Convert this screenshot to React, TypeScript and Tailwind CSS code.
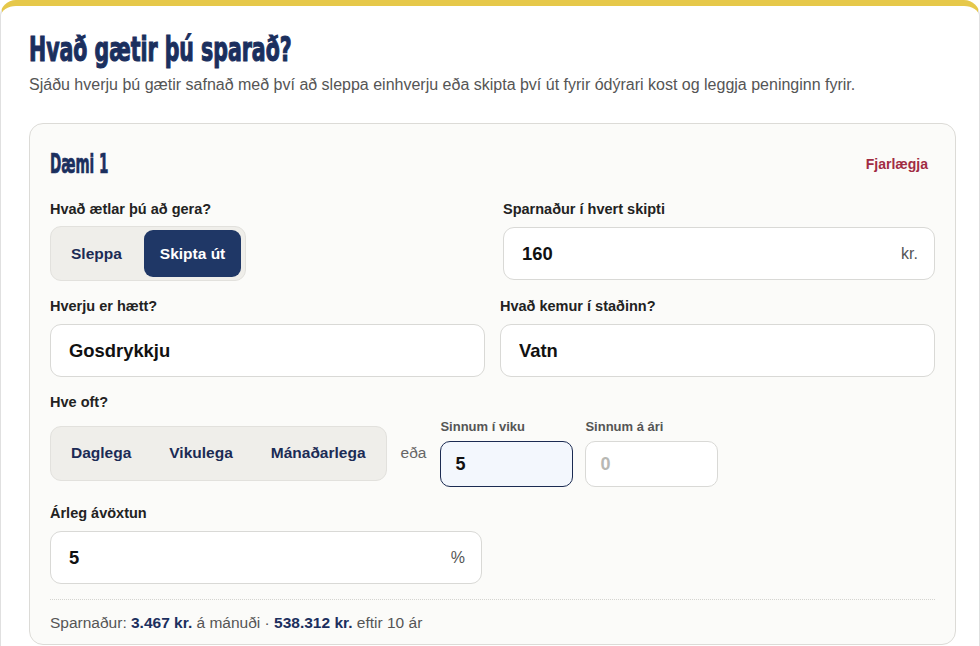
import React from "react";

const navy = "text-[#1b2f5e]";

function Label({ children }: { children: React.ReactNode }) {
  return <div className="text-[14.5px] leading-[20px] font-bold text-[#222]">{children}</div>;
}

function TextField({ value, suffix, className = "" }: { value: string; suffix?: string; className?: string }) {
  return (
    <div className={`mt-[8px] flex h-[53px] items-center rounded-[11px] border border-[#d9d9d6] bg-white pl-[18px] pr-[16px] ${className}`}>
      <input
        defaultValue={value}
        readOnly
        className="min-w-0 flex-1 bg-transparent text-[18.4px] font-bold text-[#111] outline-none"
      />
      {suffix && <span className="text-[16px] text-[#555]">{suffix}</span>}
    </div>
  );
}

function Seg({ items, active }: { items: string[]; active?: number }) {
  return (
    <div className="flex h-[55px] items-center gap-[6px] rounded-[11px] border border-[#e2e1dd] bg-[#efeeea] px-[4px] py-[3px]">
      {items.map((t, i) => (
        <button
          key={t}
          className={`flex h-[47px] items-center rounded-[9px] px-4 text-[15.5px] font-bold ${
            i === active ? "bg-[#1f3766] text-white" : "text-[#1b2b55]"
          }`}
        >
          {t}
        </button>
      ))}
    </div>
  );
}

export default function App() {
  return (
    <div className="min-h-screen bg-white font-['Liberation_Sans',Arial,sans-serif]">
      <div className="rounded-t-[16px] border-x border-t-[6px] border-x-[#e0e0e0] border-t-[#e6c84a] bg-white pl-[28px] pr-[23px] pt-[25px] pb-10">
        <h1
          className={`inline-block origin-left scale-x-[0.69] font-['DejaVu_Sans_Condensed',sans-serif] text-[33px] leading-[38px] font-bold ${navy} [-webkit-text-stroke:1.1px_#1b2f5e]`}
        >
          Hvað gætir þú sparað?
        </h1>
        <p className="mt-[5px] text-[16px] leading-[22px] text-[#555]">
          Sjáðu hverju þú gætir safnað með því að sleppa einhverju eða skipta því út fyrir ódýrari kost og leggja peninginn fyrir.
        </p>

        <div className="mt-[27px] rounded-[14px] border border-[#dcdbd7] bg-[#fbfbf9] px-[20px] pt-[20px] pb-[11px]">
          <div className="flex h-[40px] items-center justify-between">
            <h2
              className={`inline-block origin-left scale-x-[0.58] font-['DejaVu_Sans_Condensed',sans-serif] text-[26px] leading-[30px] font-bold ${navy} [-webkit-text-stroke:0.7px_#1b2f5e]`}
            >
              Dæmi 1
            </h2>
            <button className="px-[7px] text-[14px] font-bold text-[#a12c43]">Fjarlægja</button>
          </div>

          <div className="mt-[15px] grid grid-cols-2 gap-x-[15px]">
            <div>
              <Label>Hvað ætlar þú að gera?</Label>
              <div className="mt-[7px] flex">
                <Seg items={["Sleppa", "Skipta út"]} active={1} />
              </div>
            </div>
            <div className="pl-[3px]">
              <Label>Sparnaður í hvert skipti</Label>
              <TextField value="160" suffix="kr." className="h-[52px]" />
            </div>
          </div>

          <div className="mt-[15px] grid grid-cols-2 gap-x-[15px]">
            <div>
              <Label>Hverju er hætt?</Label>
              <TextField value="Gosdrykkju" />
            </div>
            <div>
              <Label>Hvað kemur í staðinn?</Label>
              <TextField value="Vatn" />
            </div>
          </div>

          <div className="mt-[15px]">
            <Label>Hve oft?</Label>
            <div className="mt-[7px] flex items-center gap-[14px]">
              <Seg items={["Daglega", "Vikulega", "Mánaðarlega"]} />
              <span className="text-[15.5px] text-[#666]">eða</span>
              <div className="flex gap-[12px]">
                <div className="w-[133px]">
                  <div className="text-[13px] leading-[16px] font-bold text-[#555]">Sinnum í viku</div>
                  <div className="mt-[6px] flex h-[46px] items-center rounded-[10px] border-[1.5px] border-[#1b2b52] bg-[#f3f7fd] px-[14px]">
                    <input defaultValue="5" readOnly className="w-full bg-transparent text-[18px] font-bold text-[#111] outline-none" />
                  </div>
                </div>
                <div className="w-[133px]">
                  <div className="text-[13px] leading-[16px] font-bold text-[#555]">Sinnum á ári</div>
                  <div className="mt-[6px] flex h-[46px] items-center rounded-[10px] border border-[#d9d9d6] bg-white px-[14px]">
                    <input placeholder="0" readOnly className="w-full bg-transparent text-[18px] font-bold text-[#111] outline-none placeholder:text-[#b8b8b4]" />
                  </div>
                </div>
              </div>
            </div>
          </div>

          <div className="mt-[16px] grid grid-cols-2 gap-x-[15px]">
            <div className="pr-[3px]">
              <Label>Árleg ávöxtun</Label>
              <TextField value="5" suffix="%" className="h-[52px]" />
            </div>
          </div>

          <div className="mt-[15px] border-t border-dotted border-[#d4d4d0] pt-[13px] text-[15.5px] leading-[20px] text-[#555]">
            Sparnaður: <b className="text-[#1b2f5e]">3.467 kr.</b> á mánuði · <b className="text-[#1b2f5e]">538.312 kr.</b> eftir 10 ár
          </div>
        </div>
      </div>
    </div>
  );
}
